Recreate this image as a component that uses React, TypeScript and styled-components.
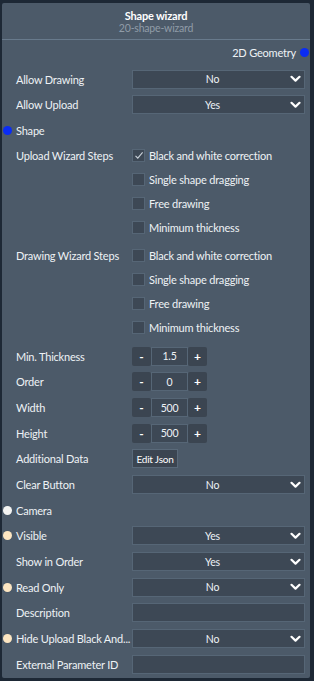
import * as React from 'react'
import styled, { createGlobalStyle, css } from 'styled-components'

const GlobalStyle = createGlobalStyle`
  html, body {
    margin: 0;
    padding: 0;
    background: #1d2835;
  }
  body {
    font-family: Lato, 'Open Sans', sans-serif;
    font-size: 10.5px;
    letter-spacing: -0.2px;
    color: #eef2f5;
  }
`

const ROW = 25.67

const Page = styled.div`
  box-sizing: border-box;
  width: 314px;
  height: 681px;
  padding: 3px 4px 0 2px;
`

const Panel = styled.div`
  background: #4c5a69;
  border-radius: 2px;
  display: flex;
  flex-direction: column;
  padding-bottom: 1px;
`

const Header = styled.div`
  height: 37px;
  box-sizing: border-box;
  border-bottom: 1px solid #687a8c;
  display: flex;
  flex-direction: column;
  align-items: center;
  padding-top: 6px;
`

const Title = styled.div`
  font-weight: 700;
  font-size: 11px;
  line-height: 13px;
  color: #ffffff;
`

const Subtitle = styled.div`
  font-size: 10.5px;
  line-height: 13px;
  color: #909ca8;
`

const GeometryRow = styled.div`
  height: 26.5px;
  display: flex;
  justify-content: flex-end;
  align-items: center;
  gap: 4px;
  padding-right: 1px;
  padding-bottom: 1px;
  box-sizing: border-box;
  font-size: 11px;
`

const Dot = styled.span<{ $color: string }>`
  display: inline-block;
  width: 9px;
  height: 9px;
  border-radius: 50%;
  background: ${({ $color }) => $color};
`

const Row = styled.div`
  height: ${ROW}px;
  display: grid;
  grid-template-columns: 116px 173px;
  align-items: center;
  padding-left: 14px;
`

const LabelWrap = styled.div`
  position: relative;
  white-space: nowrap;
  font-size: 11px;

  ${Dot} {
    position: absolute;
    left: -13px;
    top: 50%;
    margin-top: -4.5px;
  }
`

const fieldBox = css`
  box-sizing: border-box;
  height: 19px;
  background: #3d4855;
  border: 1px solid #566676;
`

const SelectBox = styled.div`
  ${fieldBox};
  display: flex;
  align-items: center;
  padding: 0 3px 0 0;
`

const SelectValue = styled.span`
  flex: 1;
  text-align: center;
  font-size: 10.5px;
  padding-left: 2px;
`

const TextBox = styled.div`
  ${fieldBox};
`

const Group = styled.div<{ $after: number }>`
  display: grid;
  grid-template-columns: 116px 173px;
  padding-left: 14px;
  margin-bottom: ${({ $after }) => $after}px;
`

const GroupLabel = styled.div`
  height: 24px;
  display: flex;
  align-items: center;
  font-size: 11px;
`

const CheckList = styled.div`
  display: flex;
  flex-direction: column;
`

const CheckItem = styled.div`
  height: 24px;
  display: flex;
  align-items: center;
  gap: 4px;
  font-size: 11px;
`

const Box = styled.span`
  box-sizing: border-box;
  width: 13px;
  height: 13px;
  background: #3d4855;
  border: 1px solid #566676;
  display: flex;
  align-items: center;
  justify-content: center;
`

const Stepper = styled.div`
  display: flex;
  align-items: center;
  height: 19px;
`

const StepButton = styled.div`
  box-sizing: border-box;
  width: 19px;
  height: 19px;
  background: #3b4551;
  border-radius: 2px;
  display: flex;
  align-items: center;
  justify-content: center;
  font-weight: 700;
  font-size: 12px;
  color: #ffffff;
`

const StepInput = styled.div`
  ${fieldBox};
  width: 37px;
  display: flex;
  align-items: center;
  justify-content: center;
  font-size: 10.5px;
`

const JsonButton = styled.div`
  box-sizing: border-box;
  width: 46px;
  height: 19px;
  background: #3b4551;
  border: 1px solid #596979;
  display: flex;
  align-items: center;
  justify-content: center;
  font-size: 10px;
  color: #ffffff;
`

const Chevron = () => (
  <svg width="11" height="8" viewBox="0 0 11 8">
    <path d="M1.5 1.8 L5.5 5.6 L9.5 1.8" fill="none" stroke="#ffffff" strokeWidth="2.2" strokeLinecap="round" strokeLinejoin="round" />
  </svg>
)

const Check = () => (
  <svg width="10" height="9" viewBox="0 0 10 9">
    <path d="M1.5 4.8 L3.8 7.2 L8.6 1.4" fill="none" stroke="#c9d1d9" strokeWidth="1.1" />
  </svg>
)

const Select = ({ value }: { value: string }) => (
  <SelectBox>
    <SelectValue>{value}</SelectValue>
    <Chevron />
  </SelectBox>
)

const StepField = ({ value }: { value: string }) => (
  <Stepper>
    <StepButton>-</StepButton>
    <StepInput>{value}</StepInput>
    <StepButton>+</StepButton>
  </Stepper>
)

const steps = [
  'Black and white correction',
  'Single shape dragging',
  'Free drawing',
  'Minimum thickness',
]

const WizardGroup = ({ label, checked, after }: { label: string; checked: string[]; after: number }) => (
  <Group $after={after}>
    <GroupLabel>{label}</GroupLabel>
    <CheckList>
      {steps.map((s) => (
        <CheckItem key={s}>
          <Box>{checked.includes(s) && <Check />}</Box>
          {s}
        </CheckItem>
      ))}
    </CheckList>
  </Group>
)

const Field = ({ label, dot, children }: { label: string; dot?: string; children?: React.ReactNode }) => (
  <Row>
    <LabelWrap>
      {dot && <Dot $color={dot} />}
      {label}
    </LabelWrap>
    {children ?? <span />}
  </Row>
)

const BLUE = '#0a2cf5'
const WHITE = '#f4f4f2'
const CREAM = '#fde6c2'

export default function App() {
  return (
    <Page>
      <GlobalStyle />
      <Panel>
        <Header>
          <Title>Shape wizard</Title>
          <Subtitle>20-shape-wizard</Subtitle>
        </Header>
        <GeometryRow>
          2D Geometry <Dot $color={BLUE} />
        </GeometryRow>
        <Field label="Allow Drawing">
          <Select value="No" />
        </Field>
        <Field label="Allow Upload">
          <Select value="Yes" />
        </Field>
        <Field label="Shape" dot={BLUE} />
        <WizardGroup label="Upload Wizard Steps" checked={['Black and white correction']} after={4} />
        <WizardGroup label="Drawing Wizard Steps" checked={[]} after={4} />
        <Field label="Min. Thickness">
          <StepField value="1.5" />
        </Field>
        <Field label="Order">
          <StepField value="0" />
        </Field>
        <Field label="Width">
          <StepField value="500" />
        </Field>
        <Field label="Height">
          <StepField value="500" />
        </Field>
        <Field label="Additional Data">
          <JsonButton>Edit Json</JsonButton>
        </Field>
        <Field label="Clear Button">
          <Select value="No" />
        </Field>
        <Field label="Camera" dot={WHITE} />
        <Field label="Visible" dot={CREAM}>
          <Select value="Yes" />
        </Field>
        <Field label="Show in Order">
          <Select value="Yes" />
        </Field>
        <Field label="Read Only" dot={CREAM}>
          <Select value="No" />
        </Field>
        <Field label="Description">
          <TextBox />
        </Field>
        <Field label="Hide Upload Black And..." dot={CREAM}>
          <Select value="No" />
        </Field>
        <Field label="External Parameter ID">
          <TextBox />
        </Field>
      </Panel>
    </Page>
  )
}
